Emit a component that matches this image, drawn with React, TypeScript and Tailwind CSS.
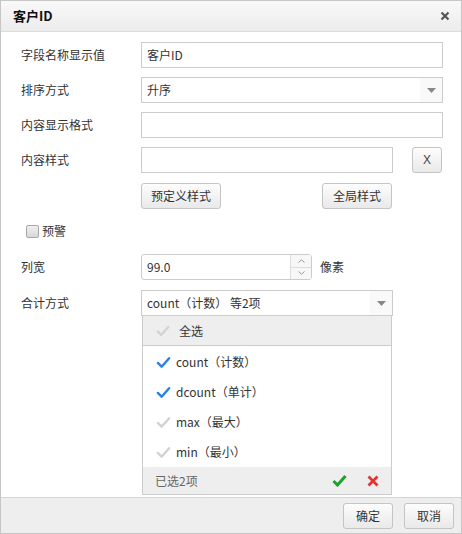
import React from "react";

const font = { fontFamily: '"Noto Sans CJK SC", "Noto Sans", sans-serif' };

function Check({ color, size = 16 }: { color: string; size?: number }) {
  return (
    <svg width={size} height={size} viewBox="0 0 16 16">
      <path d="M2 8.5 L6 12.5 L14 3.5" stroke={color} strokeWidth="2.6" fill="none" strokeLinecap="round" strokeLinejoin="round" />
    </svg>
  );
}

function Arrow() {
  return (
    <div className="w-[22px] h-full flex items-center justify-center bg-[#f9f9f9]">
      <svg width="9" height="5" viewBox="0 0 9 5"><path d="M0 0 L9 0 L4.5 5 Z" fill="#888" /></svg>
    </div>
  );
}

function Btn({ children, w }: { children: React.ReactNode; w: string }) {
  return (
    <div className={`${w} h-[26px] flex items-center justify-center rounded-[3px] border border-[#c4c4c4] bg-gradient-to-b from-[#fdfdfd] to-[#e9e9e9] text-[12px] text-[#333]`}>
      {children}
    </div>
  );
}

function Label({ children }: { children: React.ReactNode }) {
  return <div className="w-[120px] shrink-0 text-[12px] text-[#333]">{children}</div>;
}

export default function App() {
  return (
    <div style={font} className="w-[462px] h-[534px] flex flex-col border border-[#c6c6c6] bg-white text-[#333]">
      <div className="h-[31px] shrink-0 flex items-center justify-between pl-[12px] pr-[11px] bg-gradient-to-b from-[#f9f9f9] to-[#ececec] border-b border-[#dcdcdc]">
        <span className="text-[13px] font-bold text-[#111]">客户ID</span>
        <svg width="10" height="10" viewBox="0 0 10 10"><path d="M1.5 1.5 L8.5 8.5 M8.5 1.5 L1.5 8.5" stroke="#555" strokeWidth="2.2" /></svg>
      </div>
      <div className="flex-1 relative pt-[10px] pl-[20px]">
        <div className="flex items-center h-[26px]">
          <Label>字段名称显示值</Label>
          <div className="w-[302px] h-[26px] border border-[#cccccc] flex items-center pl-[5px] text-[12px]">客户ID</div>
        </div>
        <div className="flex items-center h-[26px] mt-[9px]">
          <Label>排序方式</Label>
          <div className="w-[302px] h-[26px] border border-[#cccccc] flex items-center justify-between pl-[5px] text-[12px]">
            <span>升序</span>
            <Arrow />
          </div>
        </div>
        <div className="flex items-center h-[26px] mt-[9px]">
          <Label>内容显示格式</Label>
          <div className="w-[302px] h-[26px] border border-[#cccccc]" />
        </div>
        <div className="flex items-center h-[26px] mt-[9px]">
          <Label>内容样式</Label>
          <div className="w-[252px] h-[26px] border border-[#cccccc]" />
          <div className="ml-[19px]"><Btn w="w-[30px]"><span className="text-[12px] text-[#444]" style={{ fontFamily: '"Liberation Sans", sans-serif' }}>X</span></Btn></div>
        </div>
        <div className="flex items-center h-[26px] mt-[10px]">
          <div className="w-[120px]" />
          <Btn w="w-[80px]">预定义样式</Btn>
          <div className="ml-[101px]"><Btn w="w-[70px]">全局样式</Btn></div>
        </div>
        <div className="flex items-center h-[26px] mt-[9px] pl-[5px]">
          <div className="w-[13px] h-[13px] rounded-[2px] border border-[#a8a8a8] bg-gradient-to-b from-[#f0f0f0] to-[#d8d8d8]" />
          <span className="ml-[3px] text-[12px]">预警</span>
        </div>
        <div className="flex items-center h-[26px] mt-[10px]">
          <Label>列宽</Label>
          <div className="w-[171px] h-[26px] border border-[#cccccc] rounded-[3px] flex items-center justify-between text-[12px]">
            <span className="pl-[5px]">99.0</span>
            <div className="w-[21px] h-full border-l border-[#dcdcdc] flex flex-col bg-[#f7f7f7]">
              <div className="flex-1 flex items-center justify-center border-b border-[#dcdcdc]">
                <svg width="7" height="4" viewBox="0 0 7 4"><path d="M0.5 3.5 L3.5 0.8 L6.5 3.5" stroke="#999" fill="none" /></svg>
              </div>
              <div className="flex-1 flex items-center justify-center">
                <svg width="7" height="4" viewBox="0 0 7 4"><path d="M0.5 0.5 L3.5 3.2 L6.5 0.5" stroke="#999" fill="none" /></svg>
              </div>
            </div>
          </div>
          <span className="ml-[8px] text-[12px]">像素</span>
        </div>
        <div className="flex items-center h-[26px] mt-[10px]">
          <Label>合计方式</Label>
          <div className="relative w-[252px] h-[26px]">
            <div className="w-full h-full border border-[#cccccc] flex items-center justify-between pl-[5px] text-[12px]">
              <span>count（计数） 等2项</span>
              <Arrow />
            </div>
            <div className="absolute left-[1px] top-[25px] w-[250px] border border-[#cccccc] bg-white z-10 text-[12px]">
              <div className="h-[30px] flex items-center bg-[#eeeeee] border-b border-[#cccccc] pl-[13px]">
                <Check color="#d2d2d2" size={14} />
                <span className="ml-[9px]">全选</span>
              </div>
              <div className="pt-[1px]">
                {[
                  ["count（计数）", true],
                  ["dcount（单计）", true],
                  ["max（最大）", false],
                  ["min（最小）", false],
                ].map(([t, c]) => (
                  <div key={t as string} className="h-[30px] flex items-center pl-[13px]">
                    <Check color={c ? "#2f7fe3" : "#d2d2d2"} size={15} />
                    <span className="ml-[5px]">{t as string}</span>
                  </div>
                ))}
              </div>
              <div className="h-[27px] flex items-center justify-between bg-[#eeeeee] pl-[12px] pr-[12px]">
                <span className="text-[#666]">已选2项</span>
                <div className="flex items-center gap-[20px]">
                  <svg width="15" height="13" viewBox="0 0 15 13"><path d="M1.5 7 L5.5 11 L13.5 2" stroke="#1aa32a" strokeWidth="3" fill="none" /></svg>
                  <svg width="12" height="12" viewBox="0 0 12 12"><path d="M1.5 1.5 L10.5 10.5 M10.5 1.5 L1.5 10.5" stroke="#e53333" strokeWidth="2.8" /></svg>
                </div>
              </div>
            </div>
          </div>
        </div>
      </div>
      <div className="h-[36px] shrink-0 border-t border-[#d4d4d4] bg-[#eeeeee] flex items-center justify-end gap-[11px] pr-[7px]">
        <Btn w="w-[50px]">确定</Btn>
        <Btn w="w-[50px]">取消</Btn>
      </div>
    </div>
  );
}
